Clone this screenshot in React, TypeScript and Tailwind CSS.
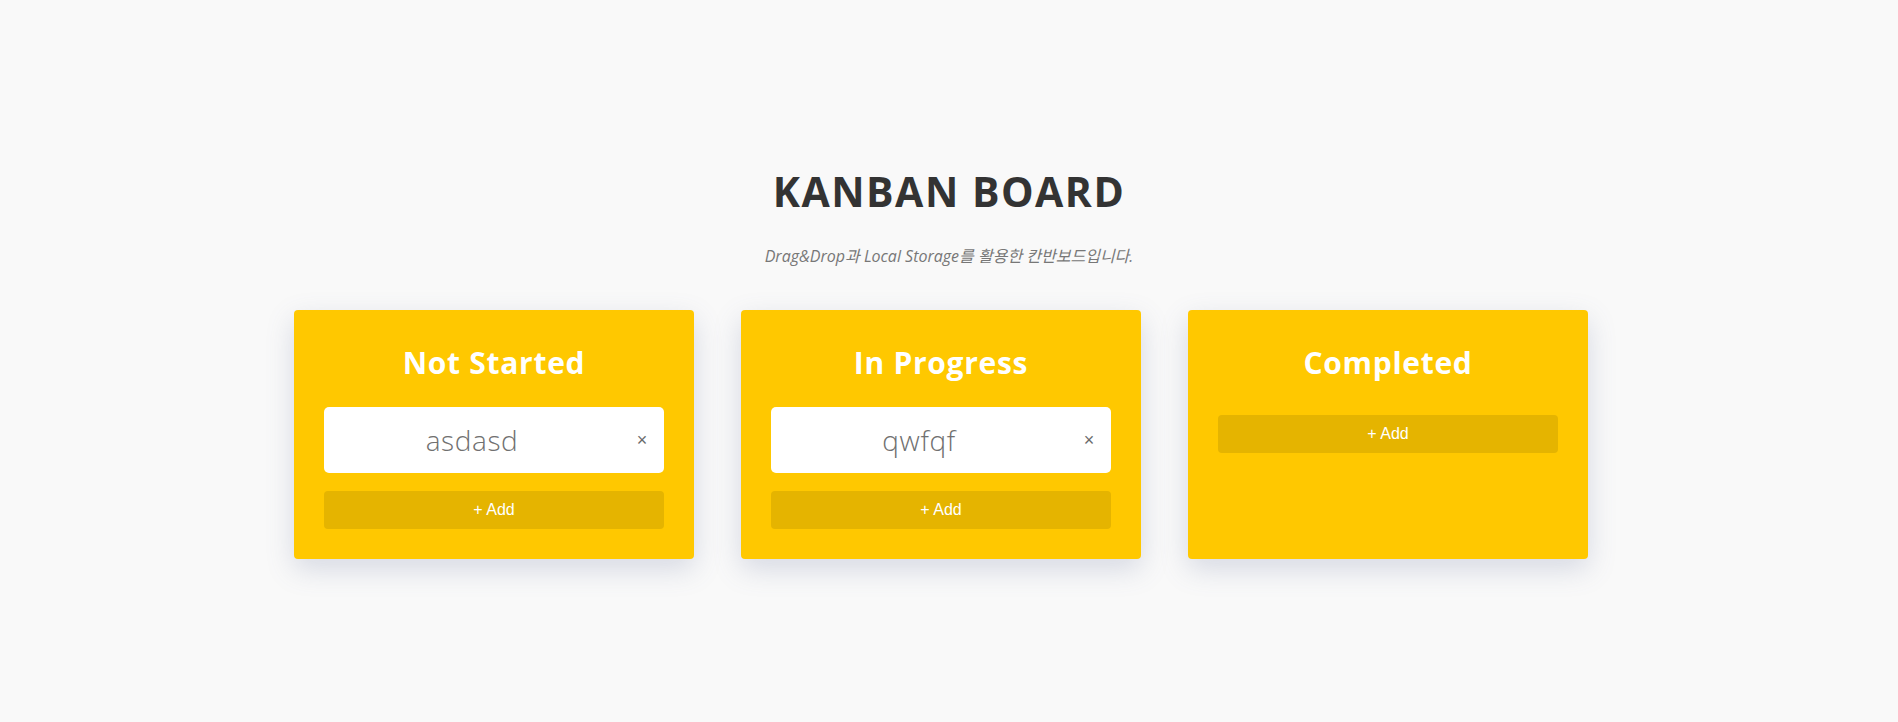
import { useState } from 'react';

type Column = {
  title: string;
  items: string[];
};

const initialColumns: Column[] = [
  { title: 'Not Started', items: ['asdasd'] },
  { title: 'In Progress', items: ['qwfqf'] },
  { title: 'Completed', items: [] },
];

function Card({ text, onRemove }: { text: string; onRemove: () => void }) {
  return (
    <div className="flex items-center h-[66px] mb-[10px] bg-white rounded-[5px]">
      <span className="flex-1 text-center text-[28px] tracking-[0.6px] text-[#707070] font-['Open_Sans',sans-serif] font-light">
        {text}
      </span>
      <button
        onClick={onRemove}
        className="w-[44px] h-full flex items-center justify-center text-[18px] text-[#6b6b6b] font-['Liberation_Sans',Arial,sans-serif]"
        aria-label="Remove"
      >
        ×
      </button>
    </div>
  );
}

export default function App() {
  const [columns, setColumns] = useState(initialColumns);

  const removeItem = (cIdx: number, iIdx: number) => {
    setColumns((cols) =>
      cols.map((c, i) =>
        i === cIdx ? { ...c, items: c.items.filter((_, j) => j !== iIdx) } : c
      )
    );
  };

  const addItem = (cIdx: number) => {
    setColumns((cols) =>
      cols.map((c, i) => (i === cIdx ? { ...c, items: [...c.items, 'New task'] } : c))
    );
  };

  return (
    <div className="min-h-[722px] bg-[#f9f9f9] pt-[166px] font-['Open_Sans',sans-serif]">
      <h1 className="text-center text-[41px] leading-[50px] font-bold text-[#333333] tracking-[1.5px]">
        KANBAN BOARD
      </h1>
      <p className="mt-[30px] text-center text-[16px] leading-[20px] italic text-[#777777] font-['Open_Sans','Noto_Sans_CJK_KR',sans-serif]">
        Drag&amp;Drop과 Local Storage를 활용한 칸반보드입니다.
      </p>

      <div className="mt-[44px] flex justify-center gap-[47px] pr-[16px]">
        {columns.map((col, cIdx) => (
          <div
            key={col.title}
            className="w-[400px] bg-[#ffc800] rounded-[4px] px-[30px] pt-[30px] pb-[30px] shadow-[0_10px_28px_rgba(90,105,150,0.22)]"
          >
            <h2 className="text-center text-[30px] leading-[46px] font-bold tracking-[0.7px] text-white mb-[21px]">
              {col.title}
            </h2>
            <div>
              {col.items.map((item, iIdx) => (
                <Card key={item + iIdx} text={item} onRemove={() => removeItem(cIdx, iIdx)} />
              ))}
            </div>
            <button
              onClick={() => addItem(cIdx)}
              className="mt-[8px] w-full h-[38px] rounded-[4px] bg-[#e5b400] text-white text-[16px] font-['Liberation_Sans',Arial,sans-serif]"
            >
              + Add
            </button>
          </div>
        ))}
      </div>
    </div>
  );
}
